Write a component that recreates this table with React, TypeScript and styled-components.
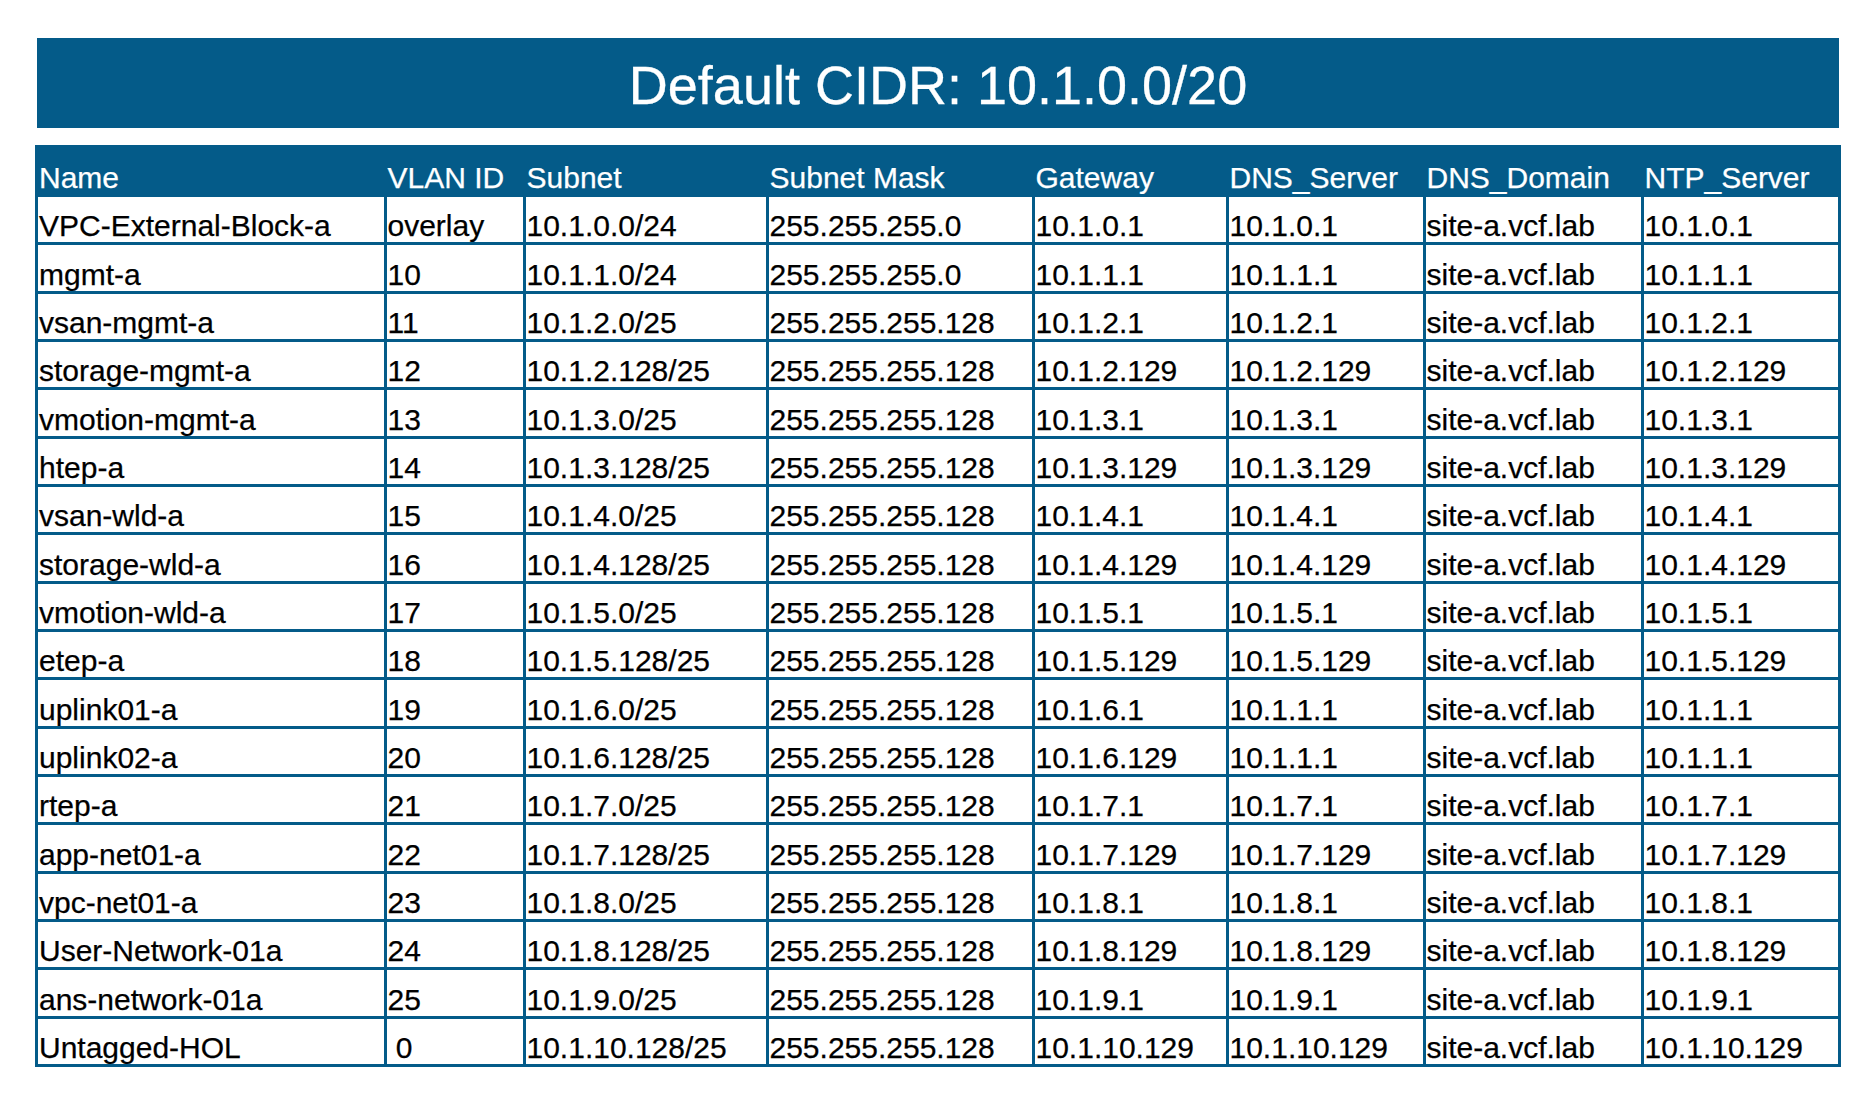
import React from "react";
import styled, { createGlobalStyle } from "styled-components";

const BLUE = "#045b89";

const GlobalStyle = createGlobalStyle`
  html, body {
    margin: 0;
    padding: 0;
    background: #ffffff;
  }
  body {
    font-family: "Liberation Sans", Arial, Helvetica, sans-serif;
  }
`;

const Page = styled.div`
  padding: 38px 0 0 35px;
`;

const Banner = styled.div`
  box-sizing: border-box;
  width: 1802px;
  height: 90px;
  margin: 0 0 17px 2px;
  padding-top: 4px;
  background: ${BLUE};
  color: #ffffff;
  font-size: 54px;
  line-height: 1;
  display: flex;
  align-items: center;
  justify-content: center;
  -webkit-text-stroke: 0.3px currentColor;
`;

const Sheet = styled.div`
  display: grid;
  grid-template-columns: 348.5px 139px 243px 266px 194px 197px 218px 197.5px;
  grid-template-rows: 49px;
  grid-auto-rows: 48px 49px 48px;
  width: fit-content;
  border-left: 3px solid ${BLUE};
  border-top: 3px solid ${BLUE};
`;

const Cell = styled.div<{ $head?: boolean }>`
  box-sizing: border-box;
  display: flex;
  align-items: flex-end;
  min-width: 0;
  overflow: hidden;
  border-right: 3px solid ${BLUE};
  border-bottom: 3px solid ${BLUE};
  padding: 0 0 1px 1px;
  background: ${(p) => (p.$head ? BLUE : "#ffffff")};
  color: ${(p) => (p.$head ? "#ffffff" : "#000000")};
  font-size: 30px;
  line-height: 30px;
  white-space: pre;
  -webkit-text-stroke: 0.25px currentColor;
`;

const headers = [
  "Name",
  "VLAN ID",
  "Subnet",
  "Subnet Mask",
  "Gateway",
  "DNS_Server",
  "DNS_Domain",
  "NTP_Server",
];

const M128 = "255.255.255.128";
const DOM = "site-a.vcf.lab";

const rows: string[][] = [
  ["VPC-External-Block-a", "overlay", "10.1.0.0/24", "255.255.255.0", "10.1.0.1", "10.1.0.1", DOM, "10.1.0.1"],
  ["mgmt-a", "10", "10.1.1.0/24", "255.255.255.0", "10.1.1.1", "10.1.1.1", DOM, "10.1.1.1"],
  ["vsan-mgmt-a", "11", "10.1.2.0/25", M128, "10.1.2.1", "10.1.2.1", DOM, "10.1.2.1"],
  ["storage-mgmt-a", "12", "10.1.2.128/25", M128, "10.1.2.129", "10.1.2.129", DOM, "10.1.2.129"],
  ["vmotion-mgmt-a", "13", "10.1.3.0/25", M128, "10.1.3.1", "10.1.3.1", DOM, "10.1.3.1"],
  ["htep-a", "14", "10.1.3.128/25", M128, "10.1.3.129", "10.1.3.129", DOM, "10.1.3.129"],
  ["vsan-wld-a", "15", "10.1.4.0/25", M128, "10.1.4.1", "10.1.4.1", DOM, "10.1.4.1"],
  ["storage-wld-a", "16", "10.1.4.128/25", M128, "10.1.4.129", "10.1.4.129", DOM, "10.1.4.129"],
  ["vmotion-wld-a", "17", "10.1.5.0/25", M128, "10.1.5.1", "10.1.5.1", DOM, "10.1.5.1"],
  ["etep-a", "18", "10.1.5.128/25", M128, "10.1.5.129", "10.1.5.129", DOM, "10.1.5.129"],
  ["uplink01-a", "19", "10.1.6.0/25", M128, "10.1.6.1", "10.1.1.1", DOM, "10.1.1.1"],
  ["uplink02-a", "20", "10.1.6.128/25", M128, "10.1.6.129", "10.1.1.1", DOM, "10.1.1.1"],
  ["rtep-a", "21", "10.1.7.0/25", M128, "10.1.7.1", "10.1.7.1", DOM, "10.1.7.1"],
  ["app-net01-a", "22", "10.1.7.128/25", M128, "10.1.7.129", "10.1.7.129", DOM, "10.1.7.129"],
  ["vpc-net01-a", "23", "10.1.8.0/25", M128, "10.1.8.1", "10.1.8.1", DOM, "10.1.8.1"],
  ["User-Network-01a", "24", "10.1.8.128/25", M128, "10.1.8.129", "10.1.8.129", DOM, "10.1.8.129"],
  ["ans-network-01a", "25", "10.1.9.0/25", M128, "10.1.9.1", "10.1.9.1", DOM, "10.1.9.1"],
  ["Untagged-HOL", " 0", "10.1.10.128/25", M128, "10.1.10.129", "10.1.10.129", DOM, "10.1.10.129"],
];

export default function App() {
  return (
    <>
      <GlobalStyle />
      <Page>
        <Banner>Default CIDR: 10.1.0.0/20</Banner>
        <Sheet>
          {headers.map((h) => (
            <Cell key={h} $head>
              {h}
            </Cell>
          ))}
          {rows.map((r, i) =>
            r.map((v, j) => <Cell key={`${i}-${j}`}>{v}</Cell>)
          )}
        </Sheet>
      </Page>
    </>
  );
}
